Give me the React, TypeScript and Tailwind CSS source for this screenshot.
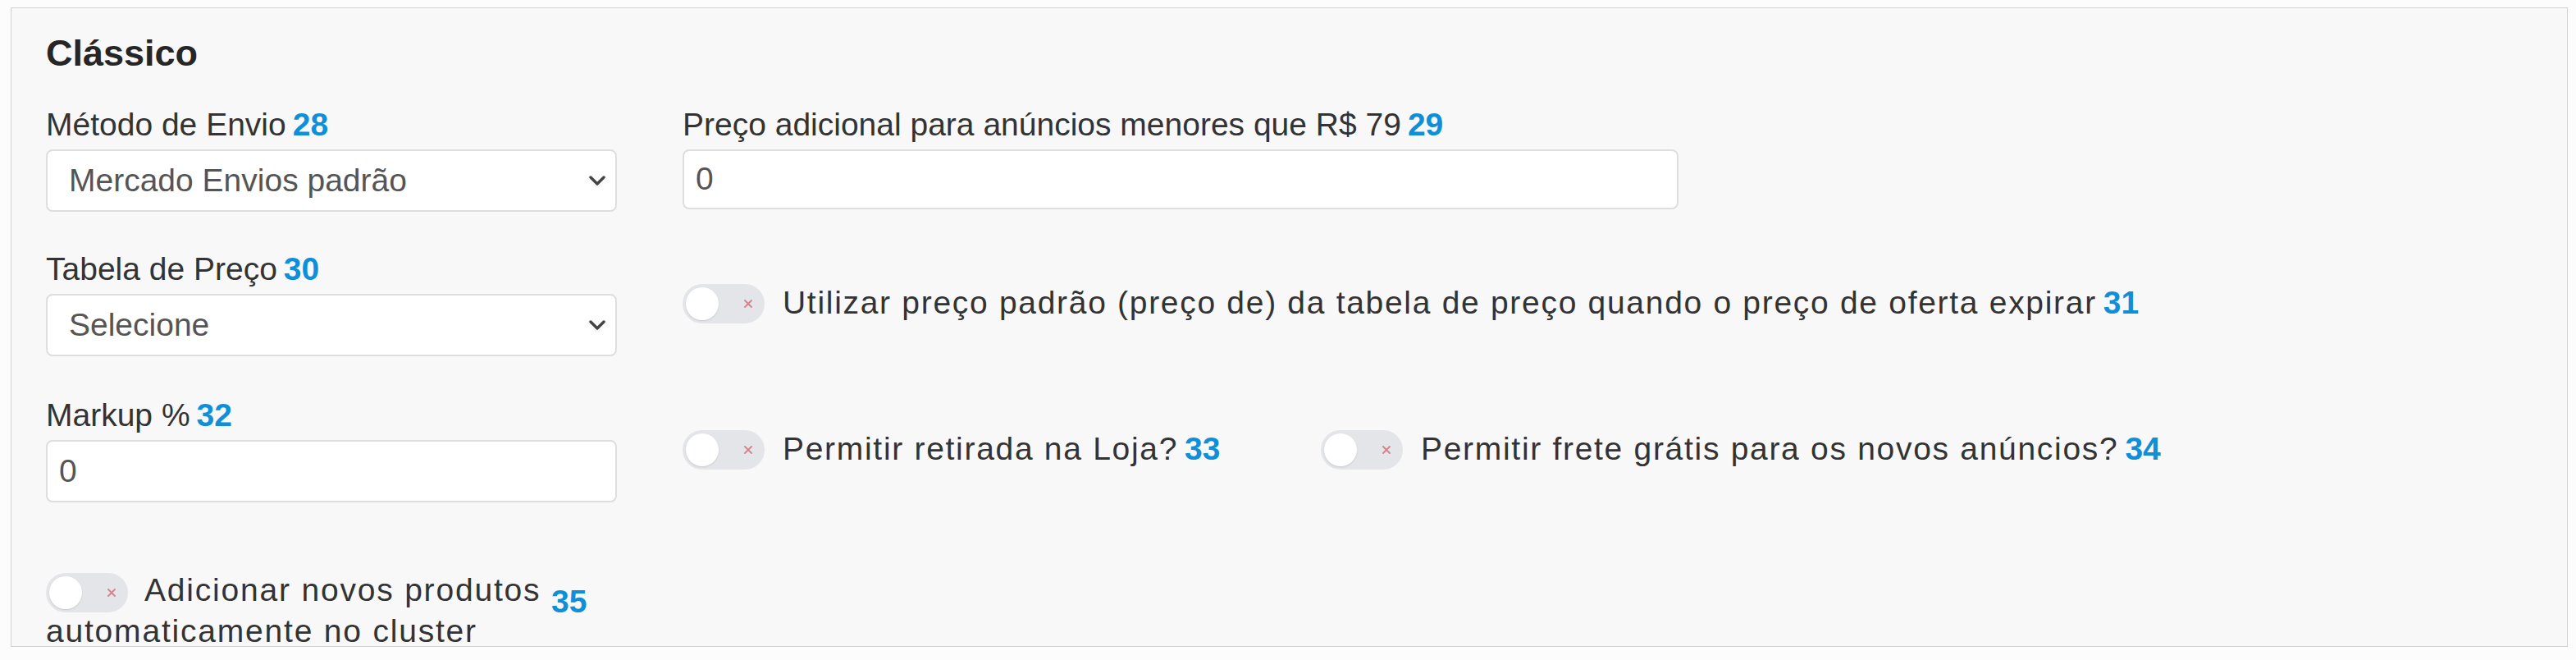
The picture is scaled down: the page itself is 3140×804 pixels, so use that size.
import React from 'react';

const font = { fontFamily: '"Liberation Sans", Arial, sans-serif' };

const Num: React.FC<{ n: number }> = ({ n }) => (
  <span className="ml-[8px] font-bold tracking-normal text-[#108fd9]">{n}</span>
);

const Chevron = () => (
  <svg width="20" height="12" viewBox="0 0 20 12" className="shrink-0">
    <path d="M2 2 L10 10 L18 2" fill="none" stroke="#444" strokeWidth="3.5" strokeLinecap="round" strokeLinejoin="round" />
  </svg>
);

const Toggle = () => (
  <span className="inline-flex w-[100px] h-[48px] shrink-0 items-center justify-between rounded-full bg-[#e3e5e9] pl-[4px] pr-[13px] align-middle">
    <span className="w-[40px] h-[40px] rounded-full bg-white shadow-[0_1px_2px_rgba(0,0,0,0.12)]" />
    <svg width="14" height="14" viewBox="0 0 14 14">
      <path d="M3 3 L11 11 M11 3 L3 11" stroke="#d8818a" strokeWidth="1.8" strokeLinecap="round" />
    </svg>
  </span>
);

const Label: React.FC<{ text: string; n: number }> = ({ text, n }) => (
  <div className="h-[46px] leading-[46px] mb-[7px] text-[#333] whitespace-nowrap">
    {text}
    <Num n={n} />
  </div>
);

const SelectBox: React.FC<{ value: string }> = ({ value }) => (
  <div className="h-[76px] flex items-center justify-between rounded-[8px] border-2 border-[#dedede] bg-white pl-[26px] pr-[12px] text-[#555]">
    <span>{value}</span>
    <Chevron />
  </div>
);

const InputBox: React.FC<{ value: string; className?: string }> = ({ value, className }) => (
  <div className={`flex items-center rounded-[8px] border-2 border-[#dedede] bg-white pl-[14px] text-[#555] ${className ?? ''}`}>
    {value}
  </div>
);

const ToggleRow: React.FC<{ text: string; n: number }> = ({ text, n }) => (
  <div className="flex items-center whitespace-nowrap">
    <Toggle />
    <span className="ml-[22px] tracking-[1.7px] text-[#333]">{text}</span>
    <Num n={n} />
  </div>
);

export default function App() {
  return (
    <div className="w-[3140px] h-[804px] bg-[#fcfcfc] pl-[13px] pt-[9px] text-[39px]" style={font}>
      <div className="w-[3117px] h-[779px] border border-[#d2d2d2] bg-[#f8f8f8] pl-[42px] pt-[28px]">
        <h2 className="text-[45px] leading-[54px] font-bold text-[#262626]">Clássico</h2>

        <div className="mt-[37px] flex flex-col">
          {/* row 1 */}
          <div className="flex items-start gap-[80px]">
            <div className="w-[696px]">
              <Label text="Método de Envio" n={28} />
              <SelectBox value="Mercado Envios padrão" />
            </div>
            <div className="w-[1214px]">
              <Label text="Preço adicional para anúncios menores que R$ 79" n={29} />
              <InputBox value="0" className="h-[73px]" />
            </div>
          </div>

          {/* row 2 */}
          <div className="mt-[47px] flex items-center gap-[80px]">
            <div className="w-[696px]">
              <Label text="Tabela de Preço" n={30} />
              <SelectBox value="Selecione" />
            </div>
            <ToggleRow text="Utilizar preço padrão (preço de) da tabela de preço quando o preço de oferta expirar" n={31} />
          </div>

          {/* row 3 */}
          <div className="mt-[49px] flex items-center gap-[80px]">
            <div className="w-[696px]">
              <Label text="Markup %" n={32} />
              <InputBox value="0" className="h-[76px]" />
            </div>
            <div className="w-[698px]">
              <ToggleRow text="Permitir retirada na Loja?" n={33} />
            </div>
            <ToggleRow text="Permitir frete grátis para os novos anúncios?" n={34} />
          </div>

          {/* row 4 */}
          <div className="mt-[84px] flex items-start">
            <div className="w-[608px] leading-[46px] tracking-[1.8px] text-[#333]">
              <Toggle />
              <span className="ml-[20px]">Adicionar novos produtos automaticamente no cluster</span>
            </div>
            <span className="ml-[8px] mt-[14px] leading-[46px] font-bold text-[#108fd9]">35</span>
          </div>
        </div>
      </div>
    </div>
  );
}
